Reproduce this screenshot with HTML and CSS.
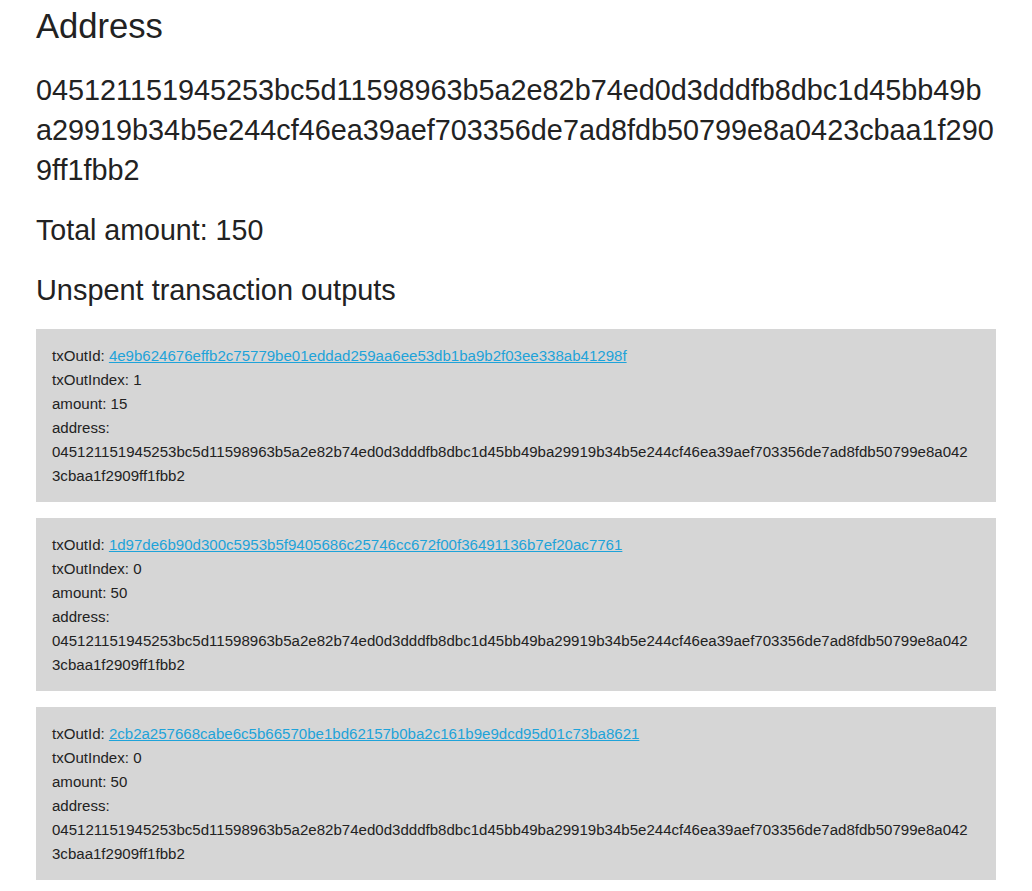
FILE: index.html
```html
<!DOCTYPE html>
<html>
<head>
<meta charset="utf-8">
<title>Address</title>
<link rel="stylesheet" href="styles.css">
</head>
<body>
<main class="page">
  <h1 class="title">Address</h1>
  <p class="addr">045121151945253bc5d11598963b5a2e82b74ed0d3dddfb8dbc1d45bb49ba29919b34b5e244cf46ea39aef703356de7ad8fdb50799e8a0423cbaa1f2909ff1fbb2</p>
  <p class="total">Total amount: 150</p>
  <h2 class="subtitle">Unspent transaction outputs</h2>
  <div class="list">
    <div class="card">
      <div class="line">txOutId: <a href="#" class="link">4e9b624676effb2c75779be01eddad259aa6ee53db1ba9b2f03ee338ab41298f</a></div>
      <div class="line">txOutIndex: 1</div>
      <div class="line">amount: 15</div>
      <div class="line">address:</div>
      <div class="line hex">045121151945253bc5d11598963b5a2e82b74ed0d3dddfb8dbc1d45bb49ba29919b34b5e244cf46ea39aef703356de7ad8fdb50799e8a0423cbaa1f2909ff1fbb2</div>
    </div>
    <div class="card">
      <div class="line">txOutId: <a href="#" class="link">1d97de6b90d300c5953b5f9405686c25746cc672f00f36491136b7ef20ac7761</a></div>
      <div class="line">txOutIndex: 0</div>
      <div class="line">amount: 50</div>
      <div class="line">address:</div>
      <div class="line hex">045121151945253bc5d11598963b5a2e82b74ed0d3dddfb8dbc1d45bb49ba29919b34b5e244cf46ea39aef703356de7ad8fdb50799e8a0423cbaa1f2909ff1fbb2</div>
    </div>
    <div class="card">
      <div class="line">txOutId: <a href="#" class="link">2cb2a257668cabe6c5b66570be1bd62157b0ba2c161b9e9dcd95d01c73ba8621</a></div>
      <div class="line">txOutIndex: 0</div>
      <div class="line">amount: 50</div>
      <div class="line">address:</div>
      <div class="line hex">045121151945253bc5d11598963b5a2e82b74ed0d3dddfb8dbc1d45bb49ba29919b34b5e244cf46ea39aef703356de7ad8fdb50799e8a0423cbaa1f2909ff1fbb2</div>
    </div>
  </div>
</main>
</body>
</html>
```
FILE: styles.css
```css
html, body {
  margin: 0;
  padding: 0;
  background: #ffffff;
}
body {
  font-family: "Liberation Sans", Arial, Helvetica, sans-serif;
  color: #222222;
}
.page {
  width: 960px;
  margin: 0 auto;
  padding-top: 5px;
}
.title {
  margin: 0;
  font-size: 34.6px;
  line-height: 42px;
  font-weight: 400;
}
.addr {
  margin: 23px 0 0;
  font-size: 28.8px;
  line-height: 40px;
  word-break: break-all;
}
.total {
  margin: 20px 0 0;
  font-size: 28.6px;
  line-height: 40px;
}
.subtitle {
  margin: 20px 0 0;
  font-size: 28.9px;
  line-height: 40px;
  font-weight: 400;
}
.list {
  margin-top: 19px;
  display: flex;
  flex-direction: column;
  gap: 16px;
}
.card {
  background: #d6d6d6;
  padding: 15px 20px 14px 16px;
  font-size: 15.05px;
  line-height: 24px;
}
.hex {
  word-break: break-all;
}
.link {
  color: #1ea3d9;
  text-decoration: underline;
}
```
